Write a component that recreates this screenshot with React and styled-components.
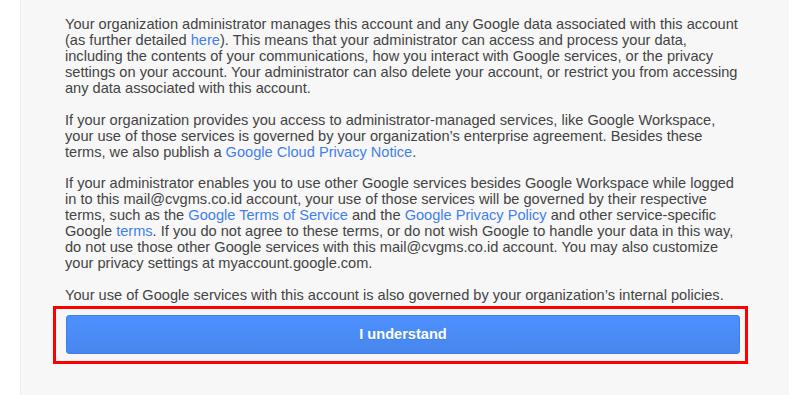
import React from 'react';
import styled, { createGlobalStyle } from 'styled-components';

const GlobalStyle = createGlobalStyle`
  html, body {
    margin: 0;
    padding: 0;
    background: #fff;
  }
  body {
    font-family: "Liberation Sans", Arial, sans-serif;
    overflow: hidden;
  }
`;

const Page = styled.div`
  display: flex;
  padding-left: 20px;
  height: 395px;
`;

const Card = styled.div`
  width: 718px;
  background: #f7f7f7;
  border-left: 1px solid #ececec;
  border-right: 1px solid #ececec;
  padding: 16px 42px 0 44px;
  box-sizing: content-box;
`;

const Para = styled.p`
  margin: 0 0 ${p => (p.$tight ? '3px' : '15.5px')};
  font-size: 14.6px;
  line-height: 16px;
  color: #444;
  white-space: nowrap;
`;

const Link = styled.a`
  color: #427fed;
  text-decoration: none;
`;

const Highlight = styled.div`
  margin-left: -12px;
  width: 674px;
  border: 3px solid #f00;
  padding: 6px 5px 7px 10px;
`;

const Button = styled.button`
  display: block;
  width: 674px;
  height: 39px;
  border: 1px solid #3f7fea;
  border-radius: 3px;
  background: linear-gradient(#4d90fe, #4787ed);
  color: #fff;
  font-family: "Liberation Sans", Arial, sans-serif;
  font-weight: bold;
  font-size: 14.6px;
  cursor: pointer;
  text-shadow: 0 1px rgba(0, 0, 0, 0.1);
`;

export default function App() {
  return (
    <>
      <GlobalStyle />
      <Page>
        <Card>
          <Para>
            Your organization administrator manages this account and any Google data associated with this account<br />
            (as further detailed <Link href="#">here</Link>). This means that your administrator can access and process your data,<br />
            including the contents of your communications, how you interact with Google services, or the privacy<br />
            settings on your account. Your administrator can also delete your account, or restrict you from accessing<br />
            any data associated with this account.
          </Para>
          <Para>
            If your organization provides you access to administrator-managed services, like Google Workspace,<br />
            your use of those services is governed by your organization’s enterprise agreement. Besides these<br />
            terms, we also publish a <Link href="#">Google Cloud Privacy Notice</Link>.
          </Para>
          <Para>
            If your administrator enables you to use other Google services besides Google Workspace while logged<br />
            in to this mail@cvgms.co.id account, your use of those services will be governed by their respective<br />
            terms, such as the <Link href="#">Google Terms of Service</Link> and the <Link href="#">Google Privacy Policy</Link> and other service-specific<br />
            Google <Link href="#">terms</Link>. If you do not agree to these terms, or do not wish Google to handle your data in this way,<br />
            do not use those other Google services with this mail@cvgms.co.id account. You may also customize<br />
            your privacy settings at myaccount.google.com.
          </Para>
          <Para $tight>
            Your use of Google services with this account is also governed by your organization’s internal policies.
          </Para>
          <Highlight>
            <Button>I understand</Button>
          </Highlight>
        </Card>
      </Page>
    </>
  );
}
